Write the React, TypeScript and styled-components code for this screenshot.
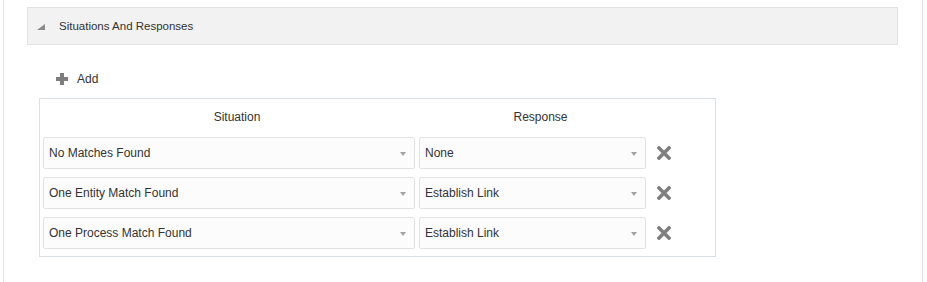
import React from "react";
import styled, { createGlobalStyle } from "styled-components";

const GlobalStyle = createGlobalStyle`
  body {
    margin: 0;
    background: #ffffff;
    font-family: "Liberation Sans", Arial, sans-serif;
    color: #333333;
  }
`;

const rows = [
  { situation: "No Matches Found", response: "None" },
  { situation: "One Entity Match Found", response: "Establish Link" },
  { situation: "One Process Match Found", response: "Establish Link" },
];

const Page = () => {
  return (
    <>
      <GlobalStyle />
      <Panel>
        <SectionHeader>
          <Disclosure width="8" height="6" viewBox="0 0 8 6">
            <polygon points="8,0 8,6 0,6" fill="#8a8a8a" />
          </Disclosure>
          <span>Situations And Responses</span>
        </SectionHeader>

        <Toolbar>
          <AddButton>
            <svg width="12" height="12" viewBox="0 0 12 12">
              <rect x="4" y="0" width="4" height="12" fill="#7d7d7d" />
              <rect x="0" y="4" width="12" height="4" fill="#7d7d7d" />
            </svg>
            <span>Add</span>
          </AddButton>
        </Toolbar>

        <Table>
          <HeadRow>
            <HeadCell>Situation</HeadCell>
            <HeadCell>Response</HeadCell>
            <span />
          </HeadRow>
          {rows.map((r, i) => (
            <Row key={i}>
              <Select>
                <span>{r.situation}</span>
                <Caret />
              </Select>
              <Select>
                <span>{r.response}</span>
                <Caret />
              </Select>
              <Remove>
                <svg width="14" height="14" viewBox="0 0 14 14">
                  <path
                    d="M2 2 L12 12 M12 2 L2 12"
                    stroke="#7f7f7f"
                    strokeWidth="3.6"
                    strokeLinecap="square"
                  />
                </svg>
              </Remove>
            </Row>
          ))}
        </Table>
      </Panel>
    </>
  );
};

export default function App() {
  return <Page />;
}

const Panel = styled.div`
  margin-left: 3px;
  width: 920px;
  height: 282px;
  box-sizing: border-box;
  border-left: 1px solid #e4e4e4;
  border-right: 1px solid #e4e4e4;
  padding: 7px 24px 0 23px;
`;

const SectionHeader = styled.div`
  height: 38px;
  box-sizing: border-box;
  background: #f2f2f2;
  border: 1px solid #e3e3e3;
  display: flex;
  align-items: center;
  padding-left: 9px;
  font-size: 11.5px;
  color: #333333;
  span {
    margin-left: 14px;
  }
`;

const Disclosure = styled.svg`
  display: block;
  margin-top: 2px;
`;

const Toolbar = styled.div`
  display: flex;
  align-items: center;
  height: 32px;
  margin-top: 18px;
  padding-left: 29px;
`;

const AddButton = styled.div`
  display: flex;
  align-items: center;
  gap: 9px;
  font-size: 12px;
  color: #333333;
  svg {
    display: block;
  }
`;

const Table = styled.div`
  margin-top: 3px;
  margin-left: 12px;
  width: 677px;
  box-sizing: border-box;
  border: 1px solid #d9e1e7;
  padding: 0 3px 7px 3px;
  display: flex;
  flex-direction: column;
  gap: 8px;
`;

const HeadRow = styled.div`
  display: grid;
  grid-template-columns: 372px 227px 1fr;
  column-gap: 4px;
  box-sizing: border-box;
  height: 30px;
  padding-top: 6px;
  align-items: center;
`;

const HeadCell = styled.div`
  text-align: center;
  padding-left: 16px;
  font-size: 12px;
  color: #333333;
`;

const Row = styled.div`
  display: grid;
  grid-template-columns: 372px 227px 1fr;
  column-gap: 4px;
  height: 32px;
`;

const Select = styled.div`
  box-sizing: border-box;
  height: 32px;
  border: 1px solid #e2e2e2;
  border-radius: 2px;
  background: #fcfcfc;
  display: flex;
  align-items: center;
  justify-content: space-between;
  padding: 0 8px 0 5px;
  font-size: 12px;
  color: #333333;
`;

const Caret = styled.span`
  width: 0;
  height: 0;
  border-left: 3px solid transparent;
  border-right: 3px solid transparent;
  border-top: 4px solid #a3a3a3;
  margin-top: 2px;
`;

const Remove = styled.div`
  display: flex;
  align-items: center;
  padding-left: 7px;
`;
